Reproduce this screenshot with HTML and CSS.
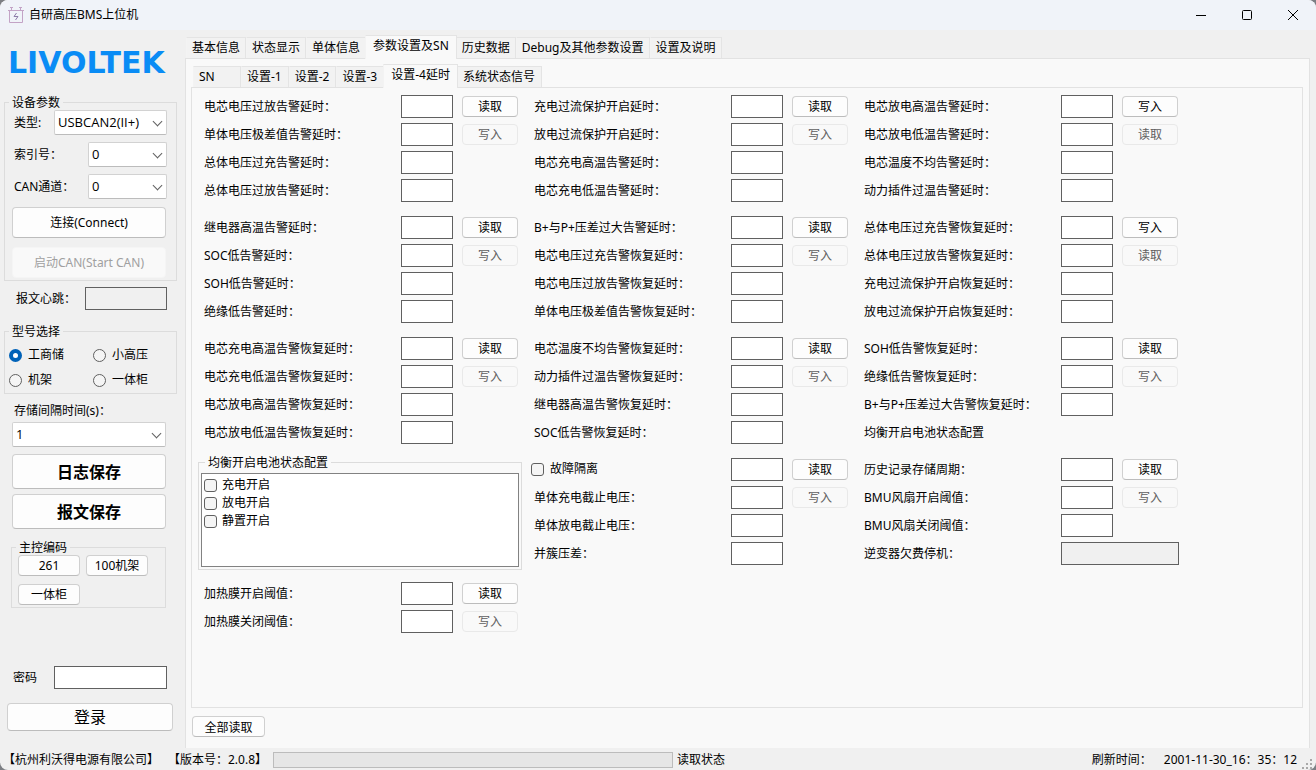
FILE: index.html
```html
<!DOCTYPE html>
<html lang="zh-CN">
<head>
    <meta charset="UTF-8">
    <meta name="viewport" content="width=device-width, initial-scale=1">
    <title>自研高压BMS上位机</title>
    <link rel="stylesheet" href="styles.css">
</head>
<body>
<div class="window">
    <header class="titlebar">
        <svg class="app-icon" width="16" height="16" viewBox="0 0 16 16" fill="none" stroke="#c3a3c6">
            <path d="M0 3.500h16M1.500 3.500v12h13v-12M3.500 3V0.500M2 0.500h3M12.500 3V0.500M11 0.500h3"/>
            <path d="M8.500 6L6 9.500h4L7.500 13" stroke="#8d7ca8"/>
        </svg>
        <h1>自研高压BMS上位机</h1>
        <div class="window-buttons">
            <button type="button" aria-label="最小化"><svg width="12" height="12" viewBox="0 0 12 12"><path d="M1 6.500h10"/></svg></button>
            <button type="button" aria-label="最大化"><svg width="12" height="12" viewBox="0 0 12 12"><rect x="1.500" y="1.500" width="9" height="9" rx="1"/></svg></button>
            <button type="button" aria-label="关闭"><svg width="12" height="12" viewBox="0 0 12 12"><path d="M1 1l10 10M11 1L1 11"/></svg></button>
        </div>
    </header>

    <div class="content">
        <aside class="sidebar">
            <div class="logo">LIVOLTEK</div>

            <fieldset class="box device">
                <legend>设备参数</legend>
                <div class="line">
                    <label for="type">类型:</label>
                    <span class="select wide"><select id="type"><option>USBCAN2(II+)</option></select></span>
                </div>
                <div class="line">
                    <label for="index">索引号：</label>
                    <span class="select"><select id="index"><option>0</option></select></span>
                </div>
                <div class="line">
                    <label for="channel">CAN通道：</label>
                    <span class="select"><select id="channel"><option>0</option></select></span>
                </div>
                <button type="button" class="btn connect">连接(Connect)</button>
                <button type="button" class="btn connect" disabled>启动CAN(Start CAN)</button>
            </fieldset>

            <div class="line heartbeat">
                <label for="heartbeat">报文心跳：</label>
                <input type="text" id="heartbeat" readonly>
            </div>

            <fieldset class="box model">
                <legend>型号选择</legend>
                <label><input type="radio" name="model" checked>工商储</label>
                <label><input type="radio" name="model">小高压</label>
                <label><input type="radio" name="model">机架</label>
                <label><input type="radio" name="model">一体柜</label>
            </fieldset>

            <div class="storage">
                <label for="interval">存储间隔时间(s)：</label>
                <span class="select"><select id="interval"><option>1</option></select></span>
                <button type="button" class="btn save">日志保存</button>
                <button type="button" class="btn save">报文保存</button>
            </div>

            <fieldset class="box codes">
                <legend>主控编码</legend>
                <button type="button" class="btn">261</button>
                <button type="button" class="btn">100机架</button>
                <button type="button" class="btn">一体柜</button>
            </fieldset>

            <div class="line password">
                <label for="password">密码</label>
                <input type="password" id="password">
            </div>
            <button type="button" class="btn login">登录</button>
        </aside>

        <main class="main">
            <nav class="tabs">
                <button type="button">基本信息</button>
                <button type="button">状态显示</button>
                <button type="button">单体信息</button>
                <button type="button" class="active">参数设置及SN</button>
                <button type="button">历史数据</button>
                <button type="button">Debug及其他参数设置</button>
                <button type="button">设置及说明</button>
            </nav>
            <section class="pane">
                <nav class="tabs sub">
                    <button type="button" class="sn">SN</button>
                    <button type="button">设置-1</button>
                    <button type="button">设置-2</button>
                    <button type="button">设置-3</button>
                    <button type="button" class="active">设置-4延时</button>
                    <button type="button">系统状态信号</button>
                </nav>
                <div class="settings">
                    <div class="group">
                        <div class="row"><label for="a1">电芯电压过放告警延时：</label><input type="text" id="a1"><button type="button" class="btn">读取</button></div>
                        <div class="row"><label for="a2">单体电压极差值告警延时：</label><input type="text" id="a2"><button type="button" class="btn" disabled>写入</button></div>
                        <div class="row"><label for="a3">总体电压过充告警延时：</label><input type="text" id="a3"></div>
                        <div class="row"><label for="a4">总体电压过放告警延时：</label><input type="text" id="a4"></div>
                    </div>
                    <div class="group">
                        <div class="row"><label for="b1">充电过流保护开启延时：</label><input type="text" id="b1"><button type="button" class="btn">读取</button></div>
                        <div class="row"><label for="b2">放电过流保护开启延时：</label><input type="text" id="b2"><button type="button" class="btn" disabled>写入</button></div>
                        <div class="row"><label for="b3">电芯充电高温告警延时：</label><input type="text" id="b3"></div>
                        <div class="row"><label for="b4">电芯充电低温告警延时：</label><input type="text" id="b4"></div>
                    </div>
                    <div class="group">
                        <div class="row"><label for="c1">电芯放电高温告警延时：</label><input type="text" id="c1"><button type="button" class="btn">写入</button></div>
                        <div class="row"><label for="c2">电芯放电低温告警延时：</label><input type="text" id="c2"><button type="button" class="btn" disabled>读取</button></div>
                        <div class="row"><label for="c3">电芯温度不均告警延时：</label><input type="text" id="c3"></div>
                        <div class="row"><label for="c4">动力插件过温告警延时：</label><input type="text" id="c4"></div>
                    </div>

                    <div class="group">
                        <div class="row"><label for="d1">继电器高温告警延时：</label><input type="text" id="d1"><button type="button" class="btn">读取</button></div>
                        <div class="row"><label for="d2">SOC低告警延时：</label><input type="text" id="d2"><button type="button" class="btn" disabled>写入</button></div>
                        <div class="row"><label for="d3">SOH低告警延时：</label><input type="text" id="d3"></div>
                        <div class="row"><label for="d4">绝缘低告警延时：</label><input type="text" id="d4"></div>
                    </div>
                    <div class="group">
                        <div class="row"><label for="e1">B+与P+压差过大告警延时：</label><input type="text" id="e1"><button type="button" class="btn">读取</button></div>
                        <div class="row"><label for="e2">电芯电压过充告警恢复延时：</label><input type="text" id="e2"><button type="button" class="btn" disabled>写入</button></div>
                        <div class="row"><label for="e3">电芯电压过放告警恢复延时：</label><input type="text" id="e3"></div>
                        <div class="row"><label for="e4">单体电压极差值告警恢复延时：</label><input type="text" id="e4"></div>
                    </div>
                    <div class="group">
                        <div class="row"><label for="f1">总体电压过充告警恢复延时：</label><input type="text" id="f1"><button type="button" class="btn">写入</button></div>
                        <div class="row"><label for="f2">总体电压过放告警恢复延时：</label><input type="text" id="f2"><button type="button" class="btn" disabled>读取</button></div>
                        <div class="row"><label for="f3">充电过流保护开启恢复延时：</label><input type="text" id="f3"></div>
                        <div class="row"><label for="f4">放电过流保护开启恢复延时：</label><input type="text" id="f4"></div>
                    </div>

                    <div class="group">
                        <div class="row"><label for="g1">电芯充电高温告警恢复延时：</label><input type="text" id="g1"><button type="button" class="btn">读取</button></div>
                        <div class="row"><label for="g2">电芯充电低温告警恢复延时：</label><input type="text" id="g2"><button type="button" class="btn" disabled>写入</button></div>
                        <div class="row"><label for="g3">电芯放电高温告警恢复延时：</label><input type="text" id="g3"></div>
                        <div class="row"><label for="g4">电芯放电低温告警恢复延时：</label><input type="text" id="g4"></div>
                    </div>
                    <div class="group">
                        <div class="row"><label for="h1">电芯温度不均告警恢复延时：</label><input type="text" id="h1"><button type="button" class="btn">读取</button></div>
                        <div class="row"><label for="h2">动力插件过温告警恢复延时：</label><input type="text" id="h2"><button type="button" class="btn" disabled>写入</button></div>
                        <div class="row"><label for="h3">继电器高温告警恢复延时：</label><input type="text" id="h3"></div>
                        <div class="row"><label for="h4">SOC低告警恢复延时：</label><input type="text" id="h4"></div>
                    </div>
                    <div class="group">
                        <div class="row"><label for="i1">SOH低告警恢复延时：</label><input type="text" id="i1"><button type="button" class="btn">读取</button></div>
                        <div class="row"><label for="i2">绝缘低告警恢复延时：</label><input type="text" id="i2"><button type="button" class="btn" disabled>写入</button></div>
                        <div class="row"><label for="i3">B+与P+压差过大告警恢复延时：</label><input type="text" id="i3"></div>
                        <div class="row"><span>均衡开启电池状态配置</span></div>
                    </div>

                    <fieldset class="box balance">
                        <legend>均衡开启电池状态配置</legend>
                        <div class="list">
                            <label><input type="checkbox">充电开启</label>
                            <label><input type="checkbox">放电开启</label>
                            <label><input type="checkbox">静置开启</label>
                        </div>
                    </fieldset>
                    <div class="group">
                        <div class="row"><label class="fault"><input type="checkbox">故障隔离</label><input type="text" aria-label="故障隔离"><button type="button" class="btn">读取</button></div>
                        <div class="row"><label for="j2">单体充电截止电压：</label><input type="text" id="j2"><button type="button" class="btn" disabled>写入</button></div>
                        <div class="row"><label for="j3">单体放电截止电压：</label><input type="text" id="j3"></div>
                        <div class="row"><label for="j4">并簇压差：</label><input type="text" id="j4"></div>
                    </div>
                    <div class="group">
                        <div class="row"><label for="k1">历史记录存储周期：</label><input type="text" id="k1"><button type="button" class="btn">读取</button></div>
                        <div class="row"><label for="k2">BMU风扇开启阈值：</label><input type="text" id="k2"><button type="button" class="btn" disabled>写入</button></div>
                        <div class="row"><label for="k3">BMU风扇关闭阈值：</label><input type="text" id="k3"></div>
                        <div class="row"><label for="k4">逆变器欠费停机：</label><input type="text" id="k4" class="long" readonly></div>
                    </div>

                    <div class="group">
                        <div class="row"><label for="l1">加热膜开启阈值：</label><input type="text" id="l1"><button type="button" class="btn">读取</button></div>
                        <div class="row"><label for="l2">加热膜关闭阈值：</label><input type="text" id="l2"><button type="button" class="btn" disabled>写入</button></div>
                    </div>
                </div>
                <button type="button" class="btn read-all">全部读取</button>
            </section>
        </main>
    </div>

    <footer class="statusbar">
        <span class="company">【杭州利沃得电源有限公司】</span>
        <span class="version">【版本号：2.0.8】</span>
        <progress value="0" max="100" aria-label="读取进度"></progress>
        <span>读取状态</span>
        <span class="refresh">刷新时间：</span>
        <time>2001-11-30_16：35：12</time>
        <svg class="grip" width="12" height="12" viewBox="0 0 12 12" fill="#a8a8a8"><path d="M9 1h2v2H9zM5 5h2v2H5zM9 5h2v2H9zM1 9h2v2H1zM5 9h2v2H5zM9 9h2v2H9z"/></svg>
    </footer>
</div>
</body>
</html>
```

FILE: styles.css
```css
* {
    box-sizing: border-box;
}

body {
    margin: 0;
    background: #7c7f84;
    color: #000;
    font: 12px/16px "Noto Sans", "Noto Sans CJK SC", sans-serif;
}

button, input, select {
    font: inherit;
    color: inherit;
    margin: 0;
}

.window {
    display: flex;
    flex-direction: column;
    min-height: 100vh;
    background: #f0f0f0;
    border-radius: 8px;
    overflow: hidden;
}

/* title bar */
.titlebar {
    display: flex;
    align-items: center;
    height: 30px;
    padding-left: 8px;
    background: #f0f3f9;
}
.titlebar h1 {
    flex: 1;
    margin: 0 0 0 5px;
    font-size: 12px;
    font-weight: normal;
}
.window-buttons {
    display: flex;
}
.window-buttons button {
    display: flex;
    align-items: center;
    justify-content: center;
    width: 46px;
    height: 28px;
    padding: 0;
    border: none;
    background: none;
}
.window-buttons svg {
    fill: none;
    stroke: #000;
}

.content {
    display: flex;
    flex: 1;
}

/* shared controls */
.btn {
    height: 21px;
    padding: 0;
    border: 1px solid #d0d0d0;
    border-bottom-color: #bcbcbc;
    border-radius: 4px;
    background: #fdfdfd;
}
.btn:disabled {
    color: #606060;
    border-color: #e9e9e9;
    background: #f9f9f9;
}
input[type="text"],
input[type="password"] {
    height: 23px;
    padding: 0 4px;
    border: 1px solid #606060;
    border-radius: 0;
    background: #fff;
}
input[type="text"][readonly] {
    background: #f0f0f0;
}
input[type="radio"],
input[type="checkbox"] {
    appearance: none;
    flex: none;
    width: 13px;
    height: 13px;
    border: 1px solid #606060;
    background: #f5f5f5;
}
input[type="radio"] {
    border-radius: 50%;
}
input[type="checkbox"] {
    border-radius: 3px;
}
input[type="radio"]:checked {
    border: 4px solid #0062b8;
    background: #fff;
}

.select {
    position: relative;
    display: block;
    width: 79px;
}
.select.wide {
    width: 113px;
}
.select select {
    appearance: none;
    display: block;
    width: 100%;
    height: 25px;
    padding: 0 20px 1px 3px;
    border: 1px solid #d2d2d2;
    border-bottom-color: #bcbcbc;
    border-radius: 2px;
    background: #fff;
    font-family: "Open Sans", "Noto Sans CJK SC", sans-serif;
    font-size: 13px;
}
.select::after {
    content: "";
    position: absolute;
    top: 8px;
    right: 6px;
    width: 6px;
    height: 6px;
    border: solid #606060;
    border-width: 0 1px 1px 0;
    transform: rotate(45deg);
    pointer-events: none;
}

.box {
    margin: 0;
    padding: 0;
    border: 1px solid #dcdcdc;
    min-width: 0;
}
.box legend {
    margin-left: 4px;
    padding: 0 3px;
    line-height: 15px;
}

.line {
    display: flex;
    align-items: center;
    justify-content: space-between;
}

/* sidebar */
.sidebar {
    display: flex;
    flex-direction: column;
    width: 185px;
    padding: 17px 12px 17px 4px;
}
.logo {
    height: 32px;
    padding-left: 4px;
    color: #0a8cf5;
    font: bold 30px/32px "DejaVu Sans", sans-serif;
}
.device {
    width: 173px;
    margin-top: 16px;
    padding-bottom: 2px;
}
.device .line {
    margin: 0 9px 7px;
}
.connect {
    display: block;
    width: 154px;
    height: 31px;
    margin: 8px 0 0 7px;
}
.connect + .connect {
    margin-top: 9px;
}
.connect:disabled {
    color: #a0a0a0;
    border-color: #f5f5f5;
}
.heartbeat {
    margin: 6px 6px 0 12px;
}
.heartbeat input {
    width: 82px;
}
.model {
    display: grid;
    grid-template-columns: 84px 1fr;
    row-gap: 9px;
    width: 173px;
    margin-top: 14px;
    padding: 8px 0 5px;
}
.model label {
    display: flex;
    align-items: center;
    gap: 6px;
    padding-left: 4px;
}
.storage {
    display: flex;
    flex-direction: column;
    margin: 9px 7px 0 8px;
}
.storage > label {
    padding-left: 2px;
    margin-bottom: 3px;
}
.storage .select {
    width: 100%;
}
.save {
    height: 35px;
    margin-top: 7px;
    font-size: 16px;
    font-weight: bold;
}
.save + .save {
    margin-top: 5px;
}
.codes {
    display: grid;
    grid-template-columns: 68px 68px;
    row-gap: 8px;
    margin: 11px 7px 0 7px;
    padding-bottom: 2px;
}
.codes .btn {
    margin-left: 6px;
}
.password {
    margin: 58px 6px 0 9px;
}
.password input {
    width: 113px;
}
.login {
    height: 28px;
    margin: 14px 0 0 3px;
    width: 166px;
    font-size: 16px;
}

/* tabs */
.main {
    display: flex;
    flex-direction: column;
    flex: 1;
    padding: 5px 6px 0 0;
}
.tabs {
    display: flex;
    align-items: flex-end;
    height: 23px;
    padding-left: 1px;
}
.tabs button {
    height: 21px;
    padding: 0 5px 1px;
    border: 1px solid #e4e4e4;
    border-bottom: none;
    border-left-color: #f3f3f3;
    background: #f2f2f2;
    text-align: left;
    white-space: nowrap;
}
.tabs .active {
    height: 24px;
    margin: 0 -1px -1px;
    padding: 0 7px 4px;
    background: #f9f9f9;
    position: relative;
}
.tabs .sn {
    width: 48px;
}
.pane {
    display: flex;
    flex-direction: column;
    align-items: flex-start;
    flex: 1;
    padding: 5px 6px 11px 5px;
    border: 1px solid #e2e2e2;
    border-bottom: none;
    background: #f9f9f9;
}
.sub {
    padding-left: 2px;
}
.sub button {
    padding: 0 6px 1px 5px;
}

/* parameter form */
.settings {
    display: grid;
    grid-template-columns: repeat(3, 330px);
    align-content: start;
    row-gap: 9px;
    flex: 1;
    align-self: stretch;
    padding: 4px 0 0 12px;
    border: 1px solid #e2e2e2;
}
.row {
    display: flex;
    align-items: center;
    height: 28px;
}
.row label,
.row span {
    width: 197px;
    padding-top: 2px;
}
.row input[type="text"] {
    width: 52px;
}
.row input[type="text"].long {
    width: 118px;
}
.row .btn {
    width: 56px;
    margin-left: 9px;
    padding-top: 2px;
}
.row .fault {
    display: flex;
    align-items: center;
    gap: 6px;
    width: 200px;
    margin-left: -3px;
    padding: 0;
}
.balance {
    width: 324px;
    margin-left: -6px;
    padding: 3px 2px 2px;
}
.list {
    height: 94px;
    padding: 2px;
    border: 1px solid #828282;
    background: #fff;
}
.list label {
    display: flex;
    align-items: center;
    gap: 5px;
    height: 18px;
}
.read-all {
    width: 73px;
    margin: 8px 0 0 1px;
    padding-top: 2px;
}

/* status bar */
.statusbar {
    display: flex;
    align-items: center;
    height: 22px;
    padding: 1px 3px 0;
}
.company {
    width: 165px;
}
.version {
    width: 105px;
}
.statusbar progress {
    appearance: none;
    width: 400px;
    height: 16px;
    margin-right: 4px;
    border: 1px solid #bcbcbc;
    background: #e6e6e6;
}
.statusbar progress::-webkit-progress-bar {
    background: #e6e6e6;
}
.refresh {
    margin-left: auto;
}
.statusbar time {
    margin: 0 4px 0 12px;
}
.grip {
    align-self: flex-end;
}
```
